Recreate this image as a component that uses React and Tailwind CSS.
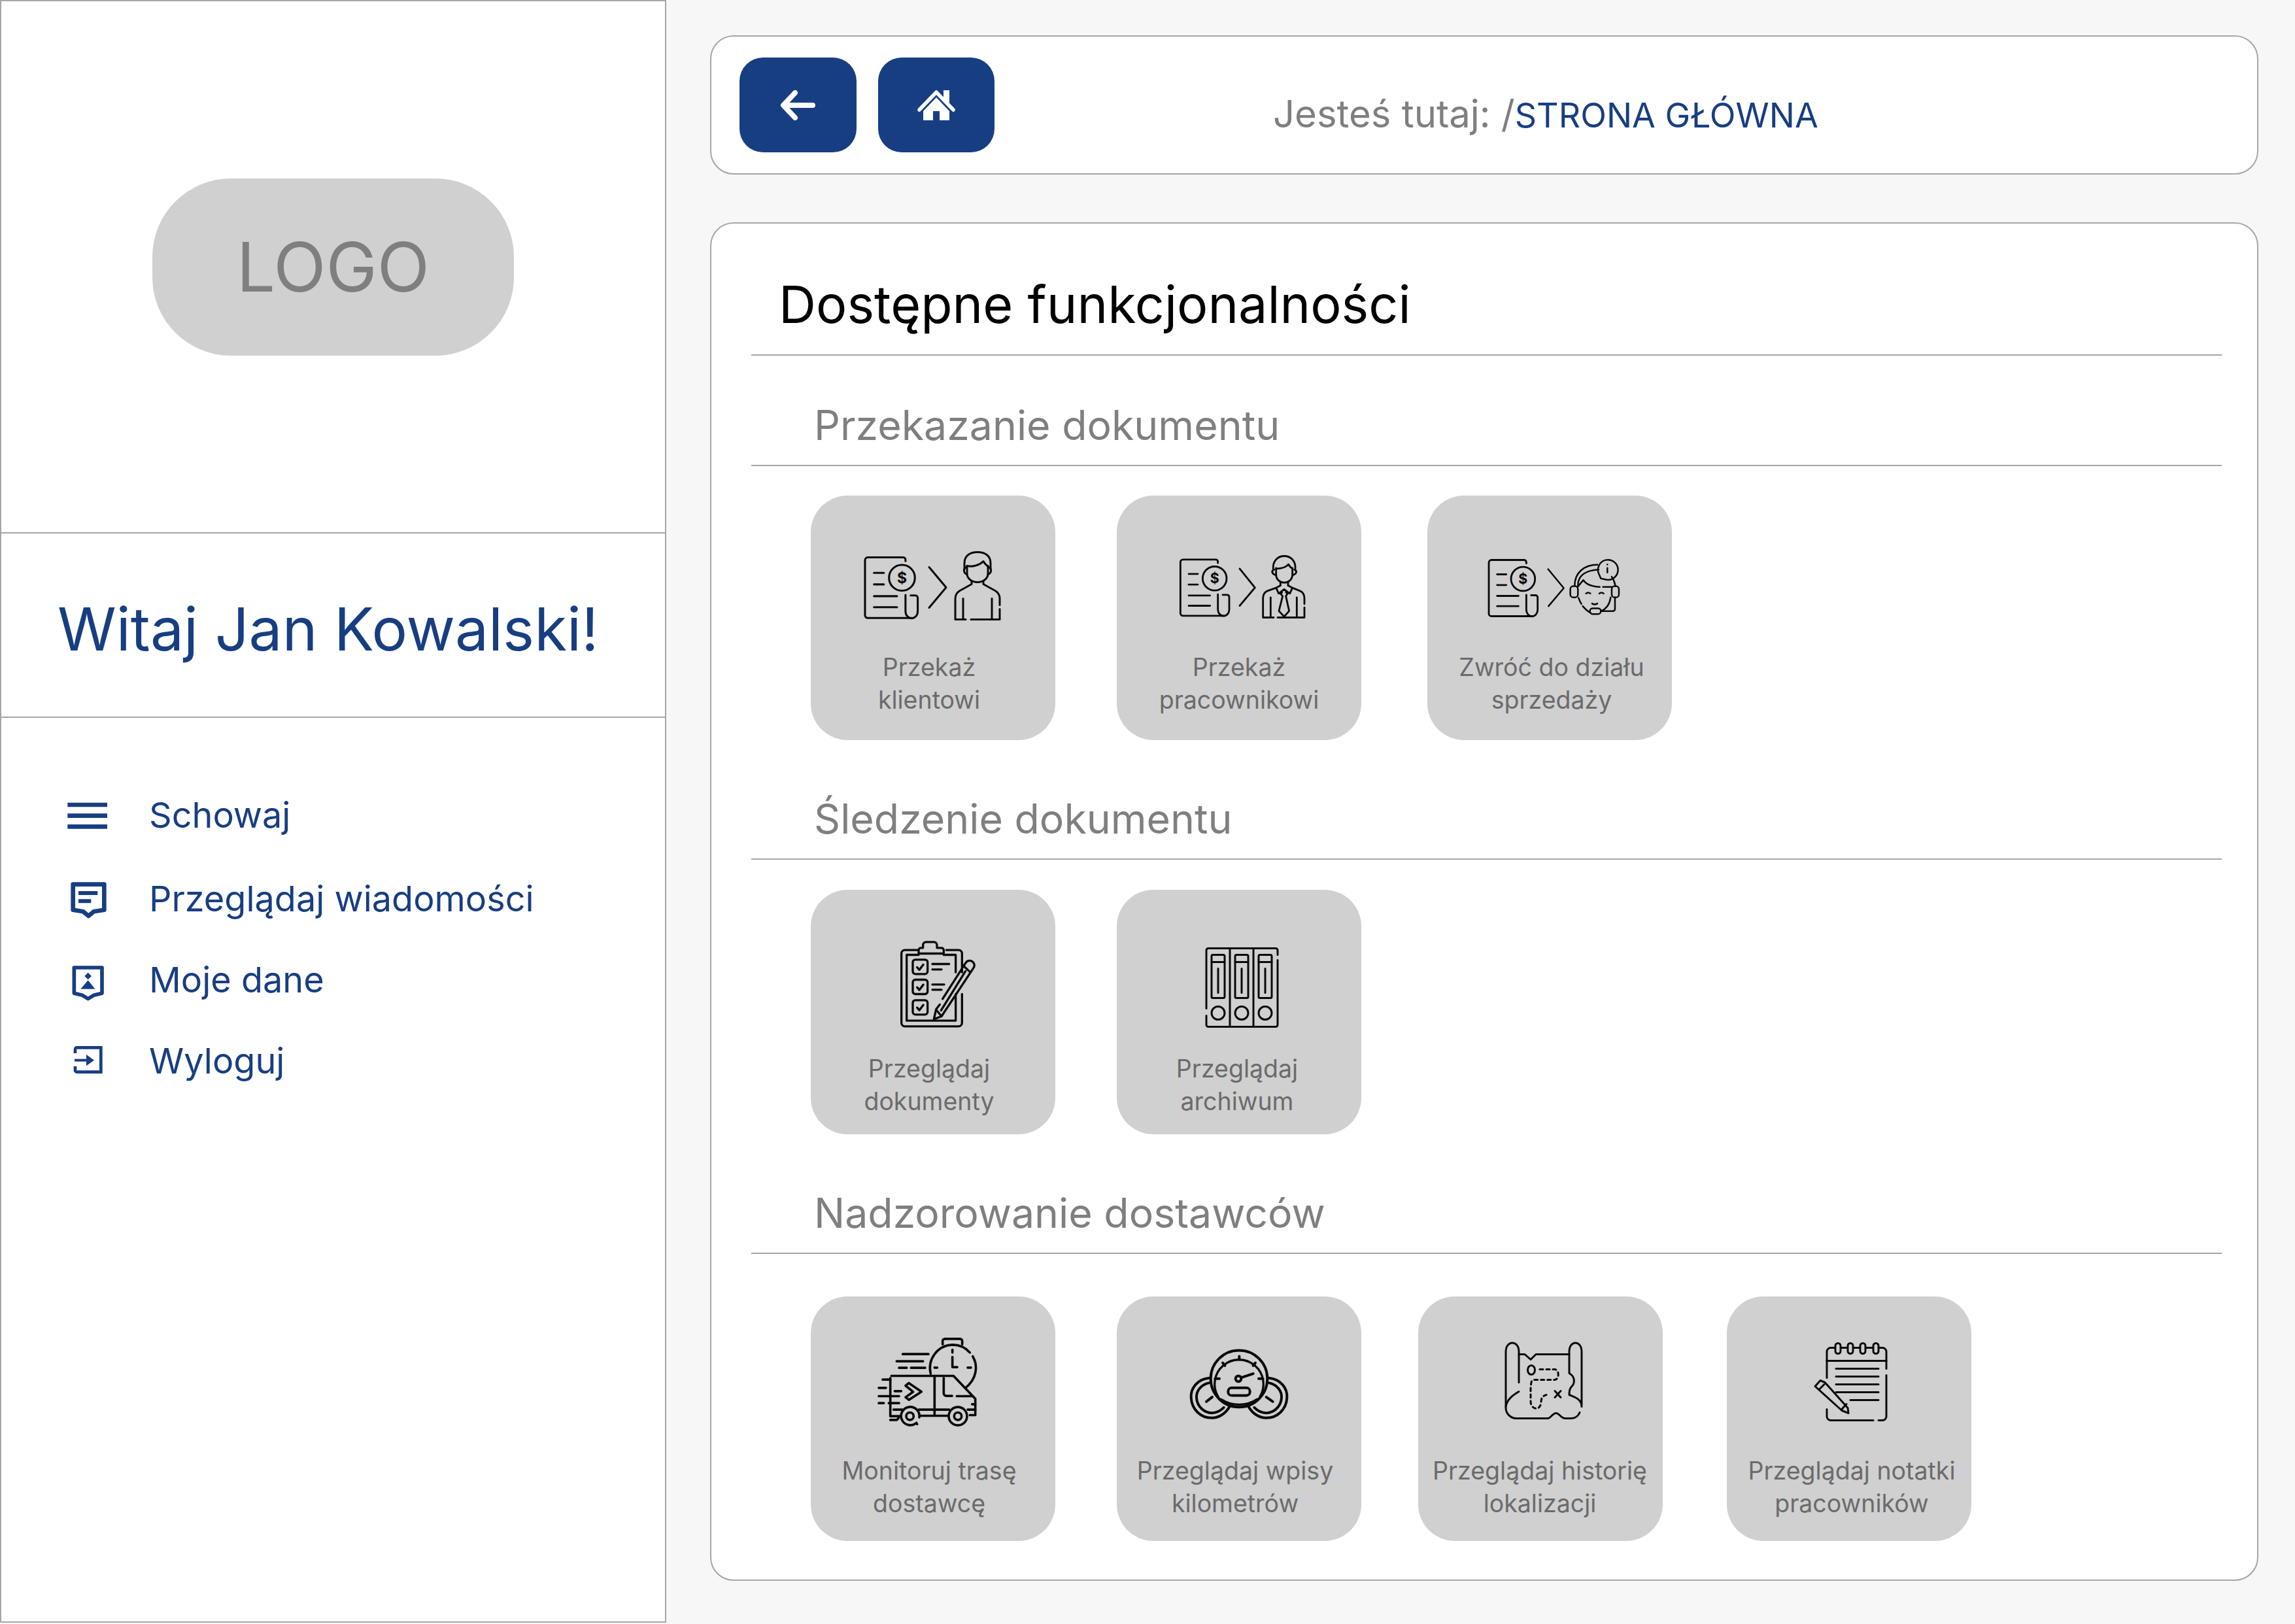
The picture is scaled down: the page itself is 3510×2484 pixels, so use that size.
const FONT = "[font-family:Inter,sans-serif]";

const S = ({ w = 8, children, transform, fill = "none" }) => (
  <g transform={transform} fill={fill} stroke="#0a0a0a" strokeWidth={w} strokeLinecap="round" strokeLinejoin="round">{children}</g>
);

const Doc = ({ transform }) => (
  <S transform={transform} w={8.5}>
    <path d="M218 92V86a10 10 0 0 0-10-10H58a12 12 0 0 0-12 12V322a12 12 0 0 0 12 12H244" />
    <circle cx="203" cy="163" r="55" />
    <path d="M84 142H126M84 191H126M84 241H182M84 288H182" />
    <path d="M218 236V305a26 30 0 0 0 26 30a26 30 0 0 0 26-30V248a10 10 0 0 0-10-10H240" />
    <text x="203" y="186" fontSize="64" fontWeight="700" textAnchor="middle" fill="#0a0a0a" stroke="none" fontFamily="Inter, sans-serif">$</text>
  </S>
);

const IconClient = () => (
  <>
    <Doc transform="translate(66.4 66.6) scale(.36)" />
    <S w={3}><path d="M181 109L207 140L181 171" /></S>
    <S w={3} transform="translate(220 85)">
      <path d="M15 26V18C15 6 24 1 35 1C46 1 55 6 55 18V26" />
      <path d="M19 22C28 24 38 21 44 15C46 19 49 21 51 23" />
      <path d="M19 22V34C19 42 27 47 35 47C43 47 51 42 51 34V22" />
      <path d="M18 24C13 26 13 33 19 35M52 24C57 26 57 33 51 35" />
      <path d="M26 46V50L8 60C3 63 1 67 1 72V104H17M25 104H69V88M69 82V72C69 67 67 63 62 60L44 50V46" />
      <path d="M13 72V104M57 72V104" />
    </S>
  </>
);

const IconEmployee = () => (
  <>
    <Doc transform="translate(82 72) scale(.3333)" />
    <S w={8.5} transform="translate(82 72) scale(.3333)">
      <path d="M318 118L388 205L318 288" />
      <path d="M472 120C465 40 580 40 573 120" />
      <path d="M485 118C510 118 530 112 542 98C548 110 555 115 560 118" />
      <path d="M485 115V145C485 170 505 182 523 182C540 182 560 170 560 145V115" />
      <path d="M476 122C462 128 465 142 484 148M569 122C583 128 580 142 561 148" />
      <path d="M505 178V195M540 178V195" />
      <path d="M505 195L485 206L497 232L522 213L548 232L560 206L540 195" />
      <path d="M512 228L505 232L515 244L498 312L522 338L545 312L530 244L538 232L530 226" />
      <path d="M485 206L445 220C430 226 425 240 425 255V342H474M492 342H615V296M615 280V255C615 240 610 226 595 220L560 206" />
      <path d="M460 250V342M580 250V342" />
    </S>
  </>
);

const IconSupport = () => (
  <>
    <Doc transform="translate(78.7 72.7) scale(.3333)" />
    <S w={7.5} transform="translate(-33 -18) scale(.3333)">
      <path d="M653 390L725 477L655 560" />
      <path d="M895 433L887 414A46 46 0 1 1 918 438Z" />
      <path d="M925 385V406M925 368V369" />
      <path d="M775 465C775 410 815 370 880 370M790 465C790 420 825 395 885 392" />
      <rect x="755" y="468" width="35" height="52" rx="14" />
      <rect x="945" y="468" width="33" height="52" rx="14" />
      <path d="M945 425C955 440 960 455 962 468" />
      <path d="M793 522C797 535 802 545 806 550M812 560C825 575 835 585 848 590M940 520C935 555 915 575 895 583" />
      <path d="M790 470L815 440C830 465 860 470 890 472M905 472H945" />
      <path d="M827 502q10-8 20 0M888 502q10-8 20 0M855 548q12 8 24 0" />
      <rect x="845" y="570" width="50" height="26" rx="12" />
      <path d="M895 583H950a10 10 0 0 0 10-10V520" />
    </S>
  </>
);

const IconClipboard = () => (
  <S w={10} transform="translate(120 69) scale(.3333)">
    <path d="M130 68H72a16 16 0 0 0-16 16V402a16 16 0 0 0 16 16H318a16 16 0 0 0 16-16V270M334 170V84a16 16 0 0 0-16-16H262" />
    <path d="M135 84V68a10 10 0 0 1 10-10H155V45a14 14 0 0 1 14-14H205a14 14 0 0 1 14 14V58H240a10 10 0 0 1 10 10V84Z" />
    <path d="M135 90H80V392H305V270M305 90V170M250 90H305" />
    <rect x="108" y="112" width="68" height="66" rx="12" />
    <rect x="108" y="204" width="68" height="66" rx="12" />
    <rect x="108" y="298" width="68" height="66" rx="12" />
    <path d="M128 147l10 12l18-24M128 239l10 12l18-24M128 332l10 12l18-24" />
    <path d="M198 132H275M198 157H240M198 226H252M198 250H240" />
    <path d="M245 292L350 128a20 20 0 0 1 38 20L240 372L205 385L215 340L232 318" />
    <path d="M218 345L240 372M335 135L372 170M238 345L350 165" />
  </S>
);

const IconBinders = () => (
  <S w={3}>
    <path d="M137 181V92a3 3 0 0 1 3-3H243a3 3 0 0 1 3 3V99M246 107V206a3 3 0 0 1-3 3H140a3 3 0 0 1-3-3V192" />
    <path d="M173 89V209M209 89V209" />
    {[155, 191, 227].map((x) => (
      <g key={x}>
        <rect x={x - 10} y="99" width="20" height="66" rx="2" />
        <path d={`M${x - 10} 110H${x + 10}M${x} 120V157`} />
        <circle cx={x} cy="188" r="10" />
      </g>
    ))}
  </S>
);

const IconTruck = () => (
  <S w={11} transform="translate(90 56) scale(.3333)">
    <path d="M335 50V35a10 10 0 0 1 10-10H415a10 10 0 0 1 10 10V50" />
    <path d="M280 185C265 120 310 55 380 52C410 52 440 65 460 88M473 105C500 150 490 210 440 250" />
    <path d="M380 75V88M380 108V155H402M298 157H310M450 157H465" />
    <path d="M152 95H270M124 128H245M135 158H170M190 158H255" />
    <path d="M95 205V380H140M100 195H385L485 300V375H460M235 378H360" />
    <path d="M110 350H150M225 350H365M450 350H485M298 195V375M470 325H485" />
    <path d="M340 205V275a12 12 0 0 0 12 12H378M400 288H470" />
    <path d="M165 240L180 228L238 268L180 305L165 293L200 268Z" />
    <path d="M60 212H95M42 250H75M115 265H145M42 288H135M42 320H65M88 320H135M95 397H125l8-8" />
    <path d="M215 410A42 42 0 1 1 228 385M218 416L212 412" />
    <circle cx="185" cy="380" r="17" />
    <circle cx="405" cy="380" r="42" />
    <circle cx="405" cy="380" r="17" />
  </S>
);

const IconGauge = () => (
  <S w={12} transform="translate(102 66) scale(.3333)">
    <circle cx="255" cy="178" r="130" />
    <path d="M160 262A112 112 0 1 1 350 262M172 272C220 305 290 305 338 272" strokeWidth="10" />
    <path d="M256 75V90M180 105L190 118M330 105L320 118M145 178H165M345 178H365" />
    <circle cx="252" cy="178" r="13" />
    <path d="M265 173L320 155" />
    <rect x="205" y="220" width="100" height="35" rx="16" />
    <path d="M118 175C65 180 32 220 35 265C38 320 80 358 130 358C165 358 195 335 212 305" />
    <path d="M118 197C80 205 58 235 60 265C62 305 95 335 130 335C150 335 170 325 185 310" />
    <path d="M392 175C445 180 478 220 475 265C472 320 430 358 380 358C345 358 315 335 298 305" />
    <path d="M392 197C430 205 452 235 450 265C448 305 415 335 380 335C360 335 340 325 325 310" />
    <path d="M105 283L132 262M380 262L410 283" />
  </S>
);

const IconMap = () => (
  <S w={3}>
    <path d="M154 131V84C154 66 134 66 134 84V170C134 180 143 186 150 186H198C203 186 205 178 211 178C216 178 218 186 225 186H234C240 186 244 184 247 177" />
    <path d="M154 145C146 150 136 156 134 168" />
    <path d="M250 168V84C250 66 231 66 231 84V117C240 122 240 132 235 137C231 140 231 146 231 150C238 153 250 156 250 168" />
    <path d="M154 88L163 88L172 96L180 88H231" />
    <ellipse cx="173" cy="112" rx="5.5" ry="7" />
    <path d="M186 111H209C216 112 216 126 209 127H178C172 127 173 132 172 138V160C172 172 186 176 188 162C188 156 189 152 196 150" strokeDasharray="5 5" />
    <path d="M209 144L218 154M218 144L209 154" />
  </S>
);

const IconNotebook = () => (
  <S w={3}>
    <path d="M153 124V84a6 6 0 0 1 6-6H238a6 6 0 0 1 6 6V110M244 120V183a6 6 0 0 1-6 6H232M224 189H159a6 6 0 0 1-6-6V172" />
    <path d="M153 98H244" />
    {[170, 189, 208, 228].map((x) => (
      <rect key={x} x={x - 4} y="71" width="8" height="16" rx="4" fill="#d0d0d0" />
    ))}
    <path d="M167 110H232M167 122H232M167 134H232M167 146H232M189 158H232" />
    <path d="M135 137L143 128L150 131L185 170L186 178L176 174Z" />
    <path d="M141 142L149 134M175 173L183 164" />
  </S>
);

const Tile = ({ icon, lines, h, shift = "" }) => (
  <div className="w-[374px] h-[374px] shrink-0 rounded-[56px] bg-[#d0d0d0] flex flex-col">
    <svg width="374" height={h} viewBox={`0 0 374 ${h - 1}`} className="block shrink-0">{icon}</svg>
    <div className={`text-center text-[37.5px] leading-[50px] text-[#6b6b6b] whitespace-nowrap ${shift}`}>
      {lines.map((l) => <div key={l}>{l}</div>)}
    </div>
  </div>
);

const SectionHead = ({ children, h }) => (
  <div className={`${h} flex items-end border-b-2 border-[#a6a6a6] pl-[96px] pb-[24px]`}>
    <span className="text-[62.6px] leading-[74px] text-[#7f7f7f]">{children}</span>
  </div>
);

const NavRow = ({ label, vb, children }) => (
  <div className="h-[70px] flex items-center pl-[88px]">
    <svg width="80" height="70" viewBox={vb} className="shrink-0 mr-[58px]">{children}</svg>
    <span className="text-[54px] leading-[70px] text-[#183e82]">{label}</span>
  </div>
);

export default function App() {
  return (
    <div className={`w-[3510px] h-[2484px] flex bg-[#f7f7f7] overflow-hidden ${FONT}`}>
      <aside className="w-[1019px] h-[2482px] shrink-0 bg-white border-2 border-[#a6a6a6] flex flex-col">
        <div className="h-[814px] shrink-0 border-b-2 border-[#a6a6a6] flex items-center justify-center">
          <div className="w-[553px] h-[271px] rounded-[120px] bg-[#d0d0d0] flex items-center justify-center text-[105px] text-[#7f7f7f]">LOGO</div>
        </div>
        <div className="h-[282px] shrink-0 border-b-2 border-[#a6a6a6] flex items-center pl-[86px] pt-[12px]">
          <span className="text-[91px] leading-[110px] text-[#183e82]">Witaj Jan Kowalski!</span>
        </div>
        <nav className="flex flex-col pt-[114px]">
          <NavRow label="Schowaj" vb="270 93 240 210">
            <path d="M310 150H492M310 200H492M310 250H492" stroke="#183e82" strokeWidth="20" fill="none" />
          </NavRow>
          <div className="mt-[58px]">
            <NavRow label="Przeglądaj wiadomości" vb="270 477 240 210">
              <path d="M335 515H478V632L430 640L406 660L382 640L335 632Z" fill="none" stroke="#183e82" strokeWidth="20" strokeLinejoin="round" />
              <path d="M360 555H448M360 592H418" stroke="#183e82" strokeWidth="18" fill="none" />
            </NavRow>
          </div>
          <div className="mt-[54px]">
            <NavRow label="Moje dane" vb="270 849 240 210">
              <path d="M340 897H468V1015L430 1024L404 1040L378 1024L340 1015Z" fill="none" stroke="#183e82" strokeWidth="17" strokeLinejoin="round" />
              <path d="M404 920L420 936L404 952L388 936ZM404 955L436 995H370Z" fill="#183e82" />
            </NavRow>
          </div>
          <div className="mt-[54px]">
            <NavRow label="Wyloguj" vb="270 1221 240 210">
              <path d="M345 1290V1272a8 8 0 0 1 8-8H463V1376H353a8 8 0 0 1-8-8V1350" fill="none" stroke="#183e82" strokeWidth="14" />
              <path d="M342 1322H405" stroke="#183e82" strokeWidth="12" fill="none" />
              <path d="M396 1296L432 1322L396 1348Z" fill="#183e82" />
            </NavRow>
          </div>
        </nav>
      </aside>

      <main className="flex-1 flex flex-col pl-[67px] pr-[56px] pt-[54px]">
        <div className="h-[213px] shrink-0 rounded-[36px] border-2 border-[#a6a6a6] bg-white flex items-center pl-[43px]">
          <button className="w-[179px] h-[145px] rounded-[36px] bg-[#183e82] flex items-center justify-center">
            <svg width="56" height="48" viewBox="1193 137 56 48">
              <path d="M1243 161H1200M1216 142L1198 161L1216 180" stroke="#fff" strokeWidth="8" fill="none" strokeLinecap="round" strokeLinejoin="round" />
            </svg>
          </button>
          <button className="ml-[33px] w-[178px] h-[145px] rounded-[36px] bg-[#183e82] flex items-center justify-center">
            <svg width="58" height="46" viewBox="0 0 58 46">
              <path d="M3 30L29 3L55 30" stroke="#fff" strokeWidth="5.5" fill="none" strokeLinecap="round" />
              <path d="M40 0H49V24L40 14Z" fill="#fff" />
              <path d="M29 11L49 32V46H34V32H24V46H9V32Z" fill="#fff" />
            </svg>
          </button>
          <div className="ml-[426px] mt-[30px] text-[58px] leading-[70px] text-[#7f7f7f] whitespace-nowrap">
            Jesteś tutaj: /<span className="text-[52px] text-[#183e82]">STRONA GŁÓWNA</span>
          </div>
        </div>

        <div className="mt-[73px] h-[2078px] shrink-0 rounded-[36px] border-2 border-[#a6a6a6] bg-white pl-[61px] pr-[54px]">
          <div className="h-[202px] border-b-2 border-[#a6a6a6] pl-[42px] pt-[78px]">
            <h1 className="text-[79px] leading-[90px] text-black">Dostępne funkcjonalności</h1>
          </div>

          <SectionHead h="h-[169px]">Przekazanie dokumentu</SectionHead>
          <div className="flex mt-[45px] pl-[91px]">
            <Tile icon={<IconClient />} h={238} lines={["Przekaż", "klientowi"]} shift="pr-[12px]" />
            <div className="ml-[94px]"><Tile icon={<IconEmployee />} h={238} lines={["Przekaż", "pracownikowi"]} /></div>
            <div className="ml-[101px]"><Tile icon={<IconSupport />} h={238} lines={["Zwróć do działu", "sprzedaży"]} shift="pl-[6px]" /></div>
          </div>

          <SectionHead h="h-[183px]">Śledzenie dokumentu</SectionHead>
          <div className="flex mt-[46px] pl-[91px]">
            <Tile icon={<IconClipboard />} h={249} lines={["Przeglądaj", "dokumenty"]} shift="pr-[12px]" />
            <div className="ml-[94px]"><Tile icon={<IconBinders />} h={249} lines={["Przeglądaj", "archiwum"]} shift="pr-[6px]" /></div>
          </div>

          <SectionHead h="h-[183px]">Nadzorowanie dostawców</SectionHead>
          <div className="flex mt-[65px] pl-[91px]">
            <Tile icon={<IconTruck />} h={242} lines={["Monitoruj trasę", "dostawcę"]} shift="pr-[12px]" />
            <div className="ml-[94px]"><Tile icon={<IconGauge />} h={242} lines={["Przeglądaj wpisy", "kilometrów"]} shift="pr-[12px]" /></div>
            <div className="ml-[87px]"><Tile icon={<IconMap />} h={242} lines={["Przeglądaj historię", "lokalizacji"]} shift="pr-[2px]" /></div>
            <div className="ml-[98px]"><Tile icon={<IconNotebook />} h={242} lines={["Przeglądaj notatki", "pracowników"]} shift="pl-[8px]" /></div>
          </div>
        </div>
      </main>
    </div>
  );
}
